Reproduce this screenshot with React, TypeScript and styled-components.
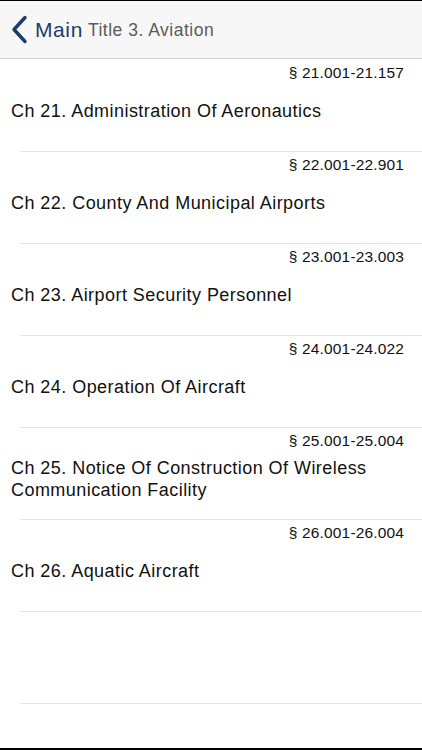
import styled, { createGlobalStyle } from 'styled-components'

const chapters = [
  { range: '§ 21.001-21.157', title: 'Ch 21. Administration Of Aeronautics' },
  { range: '§ 22.001-22.901', title: 'Ch 22. County And Municipal Airports' },
  { range: '§ 23.001-23.003', title: 'Ch 23. Airport Security Personnel' },
  { range: '§ 24.001-24.022', title: 'Ch 24. Operation Of Aircraft' },
  {
    range: '§ 25.001-25.004',
    title: 'Ch 25. Notice Of Construction Of Wireless Communication Facility',
  },
  { range: '§ 26.001-26.004', title: 'Ch 26. Aquatic Aircraft' },
]

const GlobalStyle = createGlobalStyle`
  html, body {
    margin: 0;
    padding: 0;
    background: #ffffff;
  }
  body {
    font-family: "Liberation Sans", Arial, sans-serif;
    -webkit-font-smoothing: antialiased;
  }
`

export default function App() {
  return (
    <>
      <GlobalStyle />
      <Screen>
        <NavBar>
          <BackButton>
            <svg width="17" height="29" viewBox="0 0 17 29" fill="none">
              <path
                d="M14 2.5 L3 14.5 L14 26.5"
                stroke="#1d3d68"
                strokeWidth="3.4"
                strokeLinecap="round"
                strokeLinejoin="round"
              />
            </svg>
            <BackLabel>Main</BackLabel>
          </BackButton>
          <NavTitle>Title 3. Aviation</NavTitle>
        </NavBar>
        <List>
          {chapters.map((c) => (
            <Row key={c.range}>
              <Range>{c.range}</Range>
              <TitleArea>
                <ChapterTitle>{c.title}</ChapterTitle>
              </TitleArea>
            </Row>
          ))}
          <Row />
          <Row />
        </List>
        <BottomEdge />
      </Screen>
    </>
  )
}

const Screen = styled.div`
  height: 750px;
  display: flex;
  flex-direction: column;
  border-top: 1px solid #000;
  box-sizing: border-box;
  overflow: hidden;
`

const NavBar = styled.header`
  height: 57px;
  flex-shrink: 0;
  display: flex;
  align-items: center;
  background: #f7f7f7;
  border-bottom: 1px solid #d2d2d2;
  padding: 0 0 0 11px;
`

const BackButton = styled.div`
  display: flex;
  align-items: center;
  gap: 7px;
  margin-right: 5px;
`

const BackLabel = styled.span`
  font-size: 21px;
  color: #1d3d68;
  letter-spacing: 0.6px;
`

const NavTitle = styled.span`
  font-size: 17.5px;
  color: #5b5b5b;
  letter-spacing: 0.5px;
  margin-top: 1px;
`

const List = styled.div`
  flex: 1;
  overflow: hidden;
  padding-top: 1px;
`

const Row = styled.div`
  height: 91px;
  margin-left: 20px;
  border-bottom: 1px solid #e5e5e5;
  display: flex;
  flex-direction: column;
`

const Range = styled.div`
  padding: 4px 18px 0 0;
  text-align: right;
  font-size: 15.5px;
  line-height: 18px;
  letter-spacing: 0.15px;
  color: #111;
`

const TitleArea = styled.div`
  flex: 1;
  display: flex;
  align-items: center;
  margin-left: -9px;
  padding: 0 20px 11px 0;
`

const ChapterTitle = styled.div`
  font-size: 18px;
  line-height: 22px;
  letter-spacing: 0.45px;
  color: #111;
`

const BottomEdge = styled.div`
  height: 2px;
  flex-shrink: 0;
  background: #000;
`
